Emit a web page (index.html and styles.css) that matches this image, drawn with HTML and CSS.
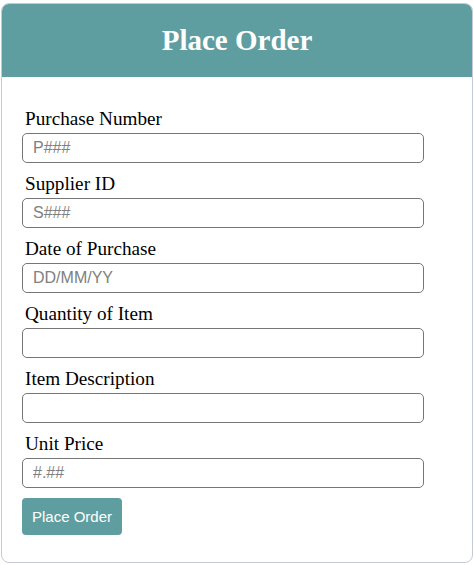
FILE: index.html
```html
<!DOCTYPE html>
<html>
<head>
<meta charset="utf-8">
<title>Place Order</title>
<link rel="stylesheet" href="styles.css">
</head>
<body>
<div class="card">
  <div class="card-header">
    <h1 class="title">Place Order</h1>
  </div>
  <form class="order-form">
    <div class="field">
      <label class="label">Purchase Number</label>
      <input class="input" type="text" placeholder="P###">
    </div>
    <div class="field">
      <label class="label">Supplier ID</label>
      <input class="input" type="text" placeholder="S###">
    </div>
    <div class="field">
      <label class="label">Date of Purchase</label>
      <input class="input" type="text" placeholder="DD/MM/YY">
    </div>
    <div class="field">
      <label class="label">Quantity of Item</label>
      <input class="input" type="text">
    </div>
    <div class="field">
      <label class="label">Item Description</label>
      <input class="input" type="text">
    </div>
    <div class="field">
      <label class="label">Unit Price</label>
      <input class="input" type="text" placeholder="#.##">
    </div>
    <button class="btn" type="button">Place Order</button>
  </form>
</div>
</body>
</html>
```
FILE: styles.css
```css
html, body {
  margin: 0;
  padding: 0;
  background: #ffffff;
}
body {
  font-family: "Liberation Serif", "Times New Roman", serif;
}
.card {
  margin: 3px 1px 2px 1px;
  height: 560px;
  box-sizing: border-box;
  border: 1px solid #c6c9d8;
  border-radius: 8px;
  overflow: hidden;
  display: flex;
  flex-direction: column;
}
.card-header {
  background: #5f9ea0;
  height: 73px;
  display: flex;
  align-items: center;
  justify-content: center;
}
.title {
  margin: 0;
  color: #ffffff;
  font-size: 29px;
  font-weight: bold;
  line-height: 1;
  padding-bottom: 1px;
}
.order-form {
  padding: 31px 48px 0 20px;
  display: flex;
  flex-direction: column;
  align-items: flex-start;
}
.field {
  display: flex;
  flex-direction: column;
  width: 100%;
  margin-bottom: 10px;
}
.label {
  font-size: 19.2px;
  line-height: 22px;
  color: #000;
  padding-left: 3px;
  margin-bottom: 3px;
}
.input {
  box-sizing: border-box;
  width: 100%;
  height: 30px;
  border: 1px solid #767676;
  border-radius: 5px;
  padding: 0 10px;
  font-family: "Liberation Sans", Arial, sans-serif;
  font-size: 16px;
  color: #000;
  background: #fff;
  outline: none;
}
.input::placeholder {
  color: #808080;
}
.btn {
  margin-top: 0;
  background: #5f9ea0;
  color: #ffffff;
  border: none;
  border-radius: 4px;
  height: 37px;
  padding: 0 10px;
  font-family: "Liberation Sans", Arial, sans-serif;
  font-size: 15px;
}
```
